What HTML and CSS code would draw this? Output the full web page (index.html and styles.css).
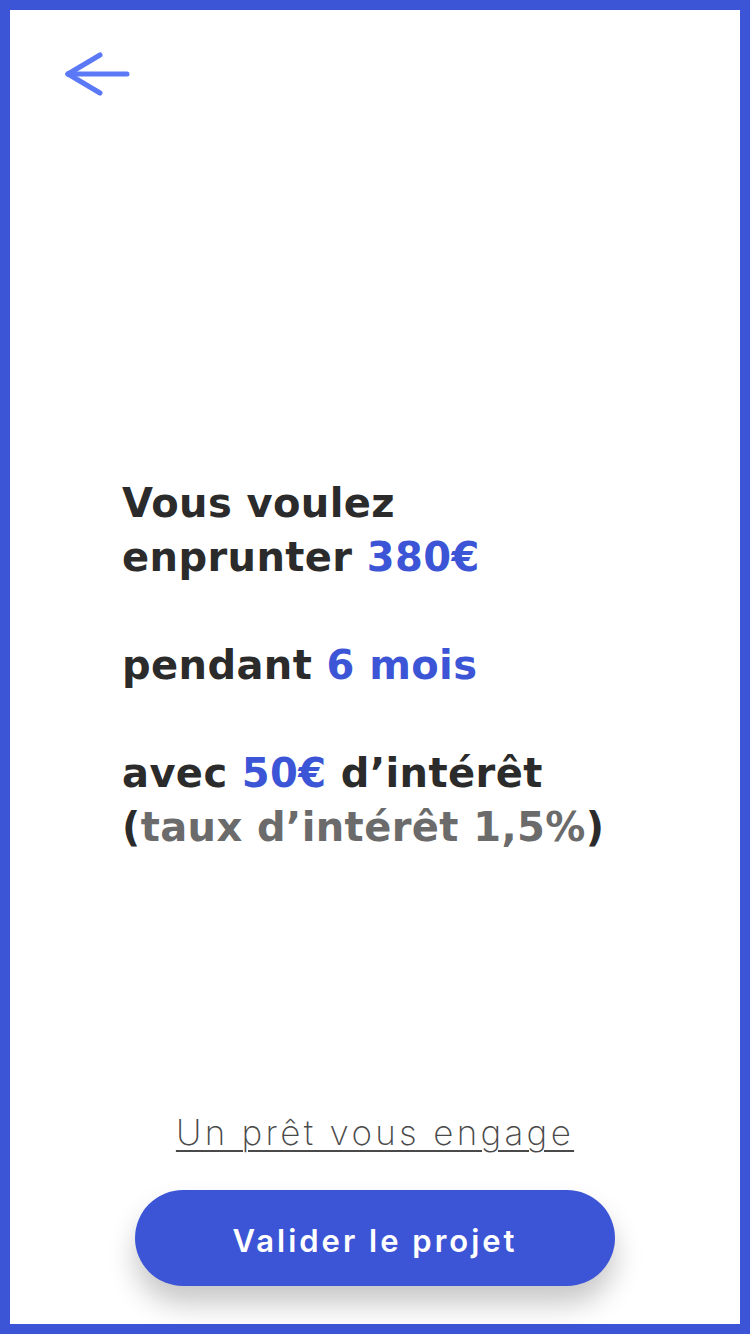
FILE: index.html
```html
<!DOCTYPE html>
<html lang="fr">
<head>
<meta charset="utf-8">
<title>Projet de prêt</title>
<link rel="stylesheet" href="styles.css">
</head>
<body>
<div class="screen">
  <header class="header">
    <a class="back" href="#" aria-label="Retour">
      <svg width="68" height="46" viewBox="0 0 68 46" fill="none" stroke="#5b78f6" stroke-width="5" stroke-linecap="round" stroke-linejoin="round">
        <path d="M63 23H4"/>
        <path d="M4 23L36 4"/>
        <path d="M4 23L36 42"/>
      </svg>
    </a>
  </header>
  <main class="summary">
    <p class="para">Vous voulez<br>enprunter <span class="blue">380€</span></p>
    <p class="para">pendant <span class="blue">6 mois</span></p>
    <p class="para">avec <span class="blue">50€</span> d’intérêt<br>(<span class="grey">taux d’intérêt 1,5%</span>)</p>
  </main>
  <footer class="footer">
    <a class="link" href="#">Un prêt vous engage</a>
    <button class="btn">Valider le projet</button>
  </footer>
</div>
</body>
</html>
```
FILE: styles.css
```css
* { box-sizing: border-box; }
html, body { margin: 0; padding: 0; background: #ffffff; }
.screen {
  width: 750px;
  height: 1334px;
  border: 10px solid #3c55d6;
  display: flex;
  flex-direction: column;
  font-family: "DejaVu Sans", sans-serif;
}
.header {
  padding: 41px 0 0 54px;
  height: 100px;
}
.back { display: inline-block; line-height: 0; }
.summary {
  padding: 366px 0 0 112px;
  flex: 1;
}
.para {
  margin: 0 0 54px 0;
  font-weight: 700;
  font-size: 40px;
  line-height: 54px;
  letter-spacing: 0.4px;
  color: #2b2b2b;
}
.blue { color: #3c55d6; }
.grey { color: #6b6b6b; }
.footer {
  display: flex;
  flex-direction: column;
  align-items: center;
  padding-bottom: 38px;
}
.link {
  font-family: "Inter", sans-serif;
  font-weight: 200;
  font-size: 35px;
  line-height: 40px;
  color: #4a4a4a;
  text-decoration: underline;
  text-underline-offset: 5px;
  text-decoration-thickness: 2px;
  letter-spacing: 3.3px;
  margin-bottom: 38px;
}
.btn {
  width: 480px;
  height: 96px;
  border: none;
  border-radius: 48px;
  background: #3c55d6;
  color: #ffffff;
  font-family: "Inter", sans-serif;
  font-weight: 600;
  font-size: 31px;
  letter-spacing: 3px;
  padding-top: 6px;
  box-shadow: 0 18px 28px rgba(0,0,0,0.22);
}
```
